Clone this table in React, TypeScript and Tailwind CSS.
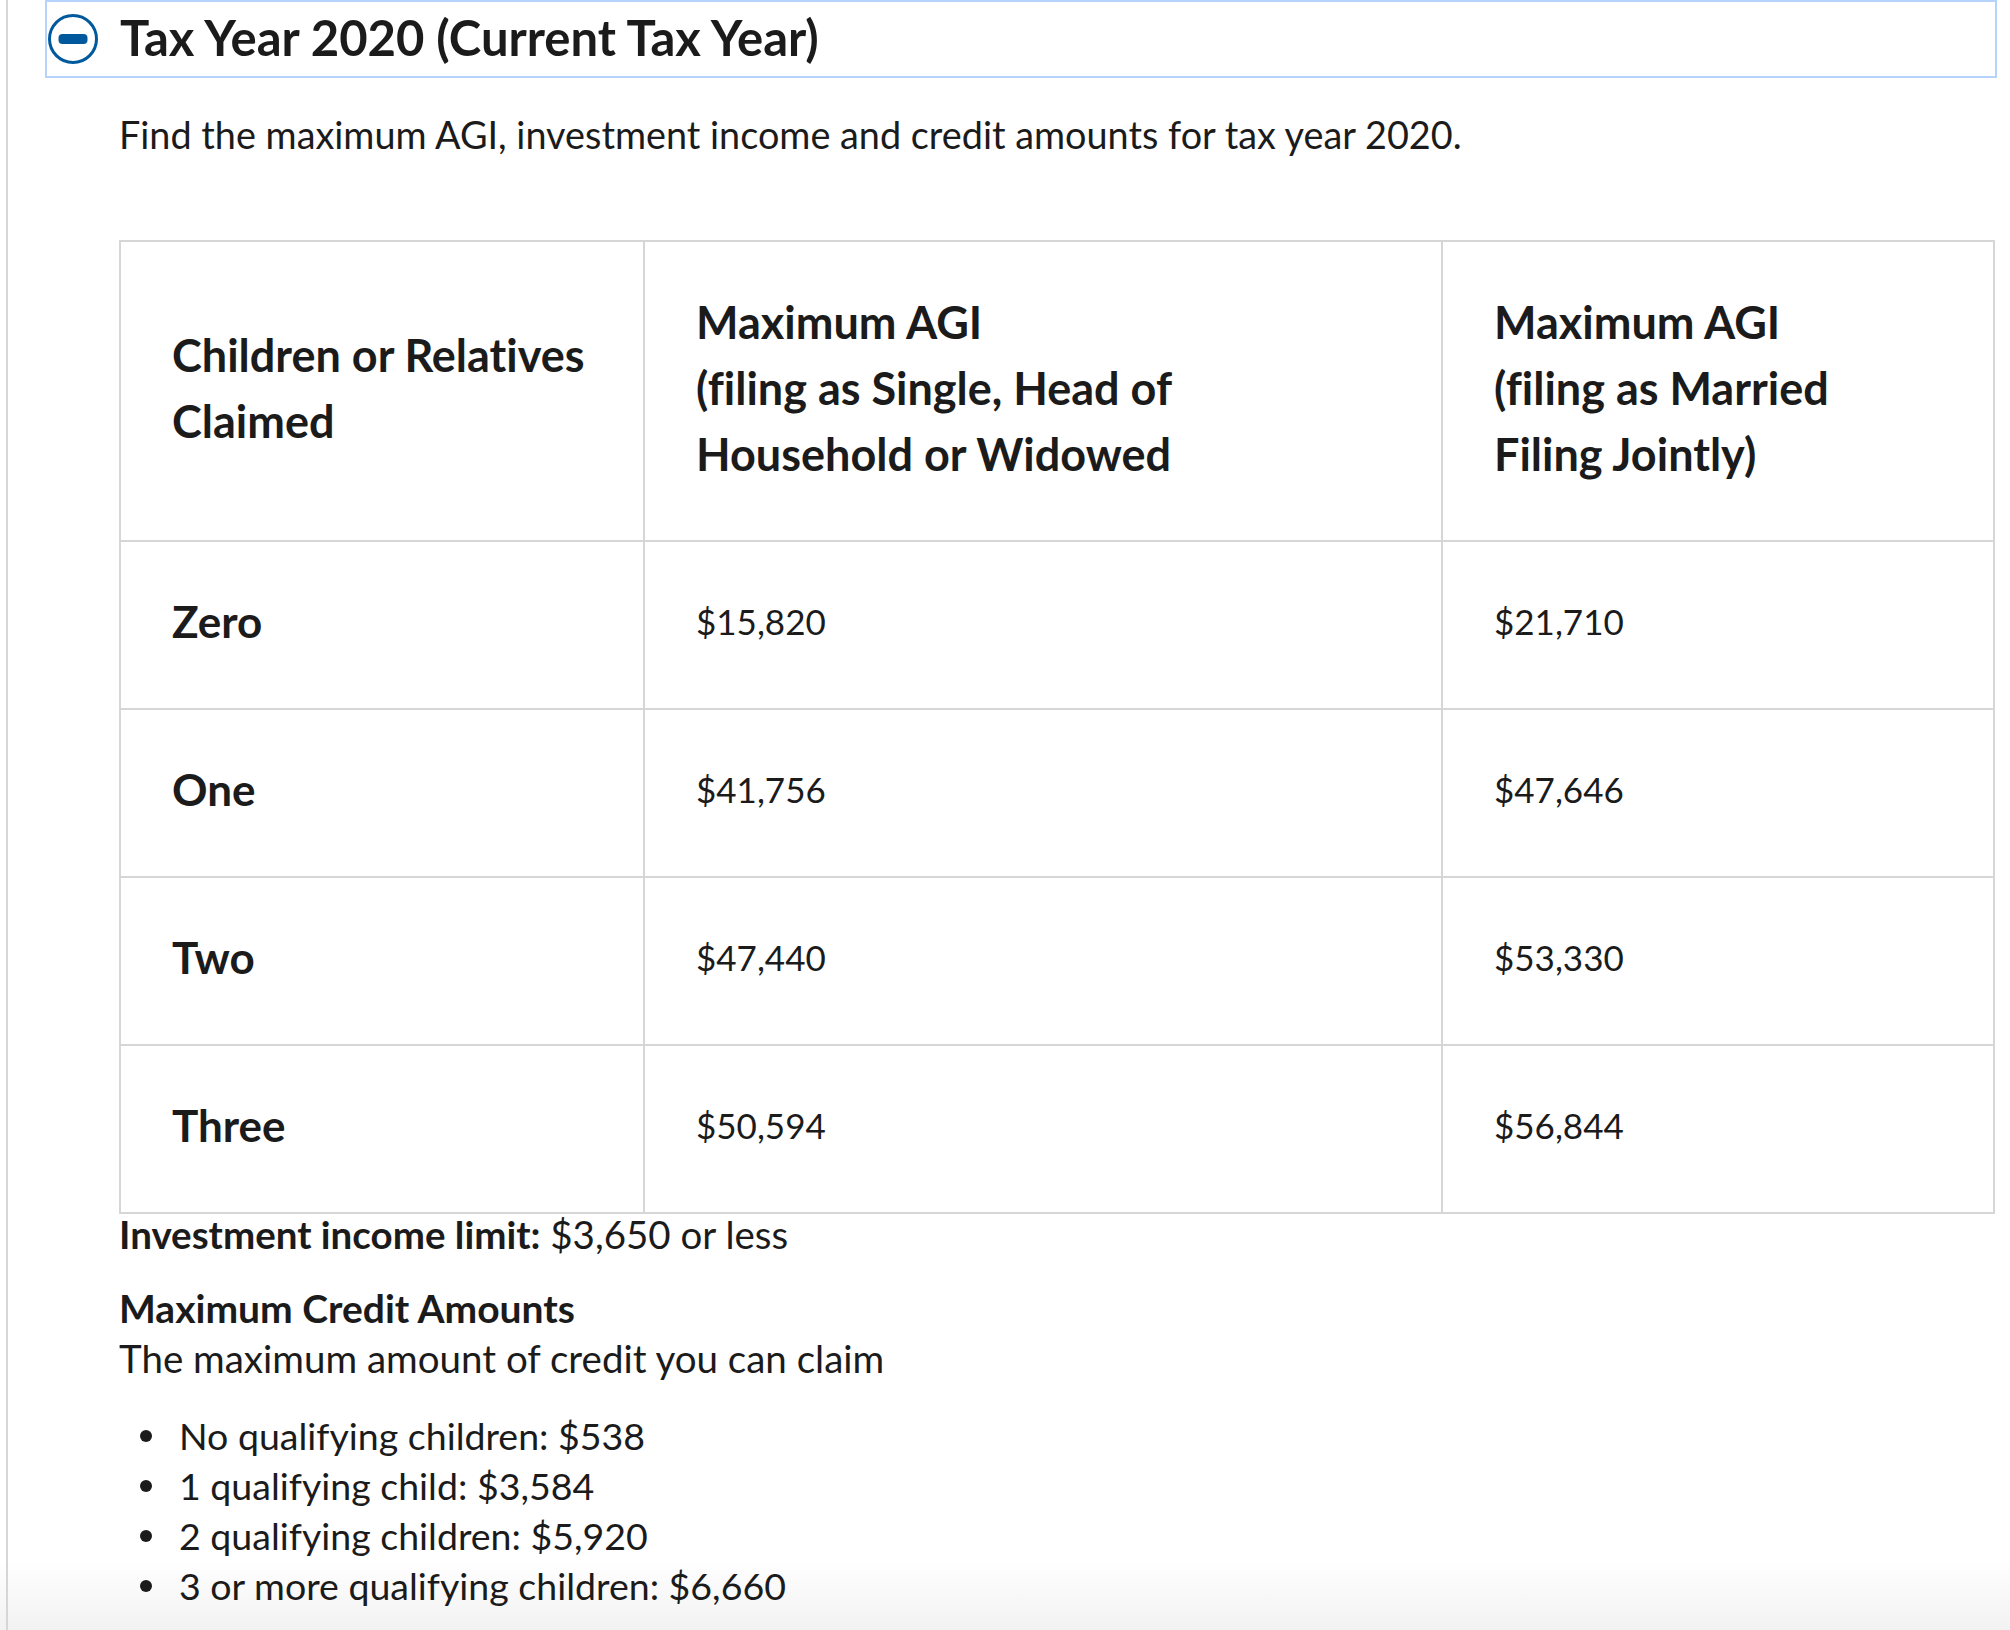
import React from 'react';

const rows = [
  { label: 'Zero', single: '$15,820', joint: '$21,710' },
  { label: 'One', single: '$41,756', joint: '$47,646' },
  { label: 'Two', single: '$47,440', joint: '$53,330' },
  { label: 'Three', single: '$50,594', joint: '$56,844' },
];

const credits = [
  'No qualifying children: $538',
  '1 qualifying child: $3,584',
  '2 qualifying children: $5,920',
  '3 or more qualifying children: $6,660',
];

const MinusCircle = () => (
  <svg width="50" height="50" viewBox="0 0 50 50" className="shrink-0">
    <circle cx="25" cy="25" r="23.5" fill="white" stroke="#00599c" strokeWidth="3" />
    <rect x="10.5" y="20" width="29" height="10" rx="4" fill="#00599c" />
  </svg>
);

export default function App() {
  return (
    <div className="w-[2010px] h-[1630px] overflow-hidden bg-[linear-gradient(to_bottom,#ffffff_1560px,#f2f2f2_1630px)] text-[#1b1b1b] font-['Lato','Noto_Sans',sans-serif] [font-variant-ligatures:none]">
      <div className="ml-[6px] h-full border-l-2 border-[#d6d6d6] pl-[37px] pr-[13px]">
        <div className="flex h-[78px] items-center gap-[22px] border-2 border-[#b5d3fb] pl-[1px]">
          <MinusCircle />
          <h3 className="mb-[4px] text-[49px] font-bold leading-none">Tax Year 2020 (Current Tax Year)</h3>
        </div>

        <div className="pl-[74px] pr-[2px]">
          <p className="mt-[32px] text-[37.8px] leading-[50px]">
            Find the maximum AGI, investment income and credit amounts for tax year 2020.
          </p>

          <table className="mt-[80px] w-full table-fixed border-collapse border-2 border-[#d6d6d6]">
            <colgroup>
              <col className="w-[524px]" />
              <col className="w-[798px]" />
              <col />
            </colgroup>
            <thead>
              <tr className="h-[300px]">
                <th className="whitespace-nowrap border-2 border-[#d6d6d6] px-[51px] pb-[7px] text-left align-middle text-[45px] font-bold leading-[66px]">
                  Children or Relatives
                  <br />
                  Claimed
                </th>
                <th className="whitespace-nowrap border-2 border-[#d6d6d6] px-[51px] pb-[7px] text-left align-middle text-[45px] font-bold leading-[66px]">
                  Maximum AGI
                  <br />
                  (filing as Single, Head of
                  <br />
                  Household or Widowed
                </th>
                <th className="whitespace-nowrap border-2 border-[#d6d6d6] px-[51px] pb-[7px] text-left align-middle text-[45px] font-bold leading-[66px]">
                  Maximum AGI
                  <br />
                  (filing as Married
                  <br />
                  Filing Jointly)
                </th>
              </tr>
            </thead>
            <tbody>
              {rows.map((r) => (
                <tr key={r.label} className="h-[168px]">
                  <td className="border-2 border-[#d6d6d6] px-[51px] pb-[8px] align-middle text-[44px] font-bold leading-[66px]">
                    {r.label}
                  </td>
                  <td className="border-2 border-[#d6d6d6] px-[51px] pb-[8px] align-middle text-[35px] leading-[66px]">
                    {r.single}
                  </td>
                  <td className="border-2 border-[#d6d6d6] px-[51px] pb-[8px] align-middle text-[35px] leading-[66px]">
                    {r.joint}
                  </td>
                </tr>
              ))}
            </tbody>
          </table>

          <p className="text-[38.5px] leading-[40px]">
            <strong className="font-bold">Investment income limit:</strong> $3,650 or less
          </p>

          <div className="mt-[29px] text-[38.5px] leading-[50px]">
            <p className="text-[39px] font-bold">Maximum Credit Amounts</p>
            <p>The maximum amount of credit you can claim</p>
          </div>

          <ul className="mt-[28px] text-[37.5px] leading-[50px]">
            {credits.map((c) => (
              <li key={c} className="flex items-center">
                <span className="ml-[21px] mr-[27px] h-[12px] w-[12px] shrink-0 rounded-full bg-[#1b1b1b]" />
                {c}
              </li>
            ))}
          </ul>
        </div>
      </div>
    </div>
  );
}
